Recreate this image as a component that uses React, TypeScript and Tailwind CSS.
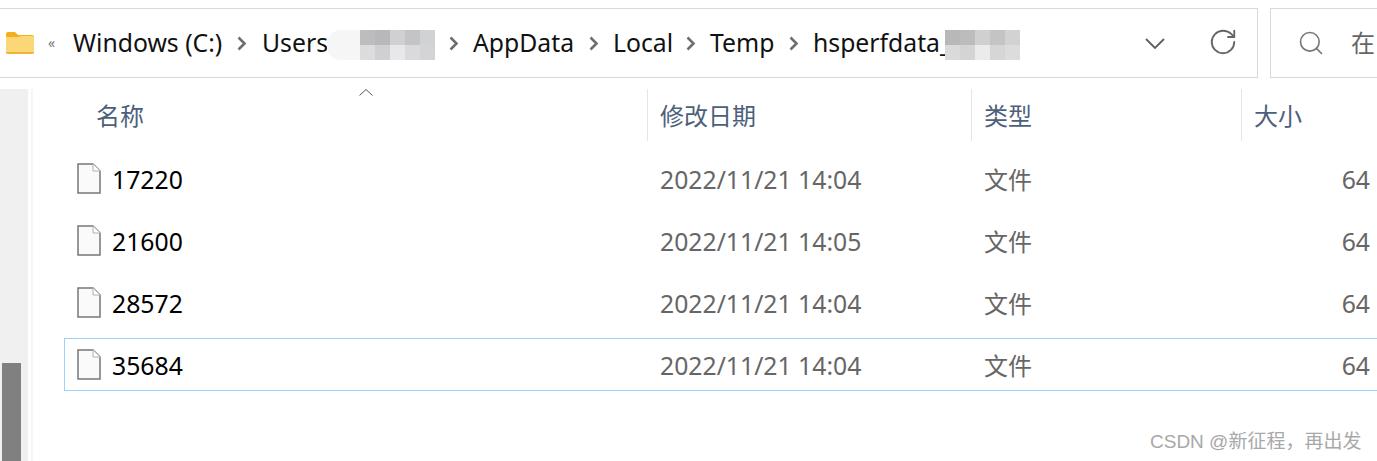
import { RotateCw, Search } from 'lucide-react';

const FONT = "font-['Noto_Sans','Noto_Sans_CJK_SC',sans-serif]";

const files = [
    { name: '17220', time: '2022/11/21 14:04' },
    { name: '21600', time: '2022/11/21 14:05' },
    { name: '28572', time: '2022/11/21 14:04' },
    { name: '35684', time: '2022/11/21 14:04', selected: true },
];

const mosaicA = ['bg-[#bdbdbf]', 'bg-[#b8b8ba]', 'bg-[#d0d0d2]', 'bg-[#c4c4c6]', 'bg-[#d0d2d4]', 'bg-[#dcdcde]', 'bg-[#d0d0d2]', 'bg-[#e8e8ea]', 'bg-[#dadadc]', 'bg-[#d4d4d6]'];
const mosaicB = ['bg-[#b8b8b8]', 'bg-[#bcbcbc]', 'bg-[#d0d0d0]', 'bg-[#c4c4c4]', 'bg-[#d2d2d2]', 'bg-[#dadada]', 'bg-[#d4d4d4]', 'bg-[#ebebeb]', 'bg-[#d6d6d6]', 'bg-[#dcdcdc]'];

function Mosaic({ cells }: { cells: string[] }) {
    return (
        <div className="grid grid-cols-[repeat(5,15px)] grid-rows-[repeat(2,15px)] shrink-0">
            {cells.map((c, i) => <div key={i} className={c} />)}
        </div>
    );
}

function Sep({ className }: { className: string }) {
    return (
        <svg width="15" height="15" viewBox="0 0 15 15" className={`shrink-0 ${className}`}>
            <path d="M4.5 1.5l6 6-6 6" fill="none" stroke="#6e6e6e" strokeWidth="2.6" />
        </svg>
    );
}

function FolderIcon() {
    return (
        <svg width="28" height="22" viewBox="0 0 28 22" className="shrink-0">
            <path d="M0 2a2 2 0 0 1 2-2h7l3 3h14a2 2 0 0 1 2 2v3H0z" fill="#f2b01e" />
            <path d="M0 5h12l3-1h11a2 2 0 0 1 2 2v14a2 2 0 0 1-2 2H2a2 2 0 0 1-2-2z" fill="#fcd778" />
            <path d="M0 20h28a2 2 0 0 1-2 2H2a2 2 0 0 1-2-2z" fill="#eeb433" />
        </svg>
    );
}

function FileIcon() {
    return (
        <svg width="24" height="31" viewBox="0 0 24 31" className="shrink-0">
            <path d="M1 1h15l7 7v22H1z" fill="#fafafa" stroke="#777" strokeWidth="1.5" />
            <path d="M16 1v7h7" fill="#fff" stroke="#b0b0b0" strokeWidth="1" />
        </svg>
    );
}

export default function App() {
    return (
        <div className={`${FONT} relative w-[1377px] h-[461px] overflow-hidden bg-white flex flex-col pt-2`}>
            {/* Address bar */}
            <div className="flex h-[70px] shrink-0">
                <div className="w-[1258px] border border-l-0 border-[#d9d9d9] flex items-center pl-1.5 text-[24.75px] text-[#111] whitespace-nowrap">
                    <FolderIcon />
                    <span className="ml-[14px] w-[9px] text-[14px] leading-none text-[#777]">«</span>
                    <span className="ml-[16px] w-[150px]">Windows (C:)</span>
                    <Sep className="ml-[11px]" />
                    <span className="ml-[13px] w-[63px]">Users</span>
                    <div className="ml-[2px] mt-1 w-[33px] h-[30px] rounded-l-[14px] bg-[#f6f6f6] shrink-0" />
                    <div className="mt-1"><Mosaic cells={mosaicA} /></div>
                    <Sep className="ml-[11px]" />
                    <span className="ml-[12px] w-[99px]">AppData</span>
                    <Sep className="ml-[14px]" />
                    <span className="ml-[12px] w-[56px]">Local</span>
                    <Sep className="ml-[14px]" />
                    <span className="ml-[12px] w-[63px]">Temp</span>
                    <Sep className="ml-[13px]" />
                    <span className="ml-[12px] w-[132px]">hsperfdata_</span>
                    <div className="mt-1"><Mosaic cells={mosaicB} /></div>
                    <svg width="20" height="11" viewBox="0 0 20 11" className="ml-[125px] shrink-0">
                        <path d="M1 1l9 9 9-9" fill="none" stroke="#5f5f5f" strokeWidth="1.8" />
                    </svg>
                    <RotateCw className="ml-[43px] -mt-[3px] w-[30px] h-[30px] text-[#666] shrink-0" strokeWidth={1.5} />
                </div>
                <div className="ml-3 flex-1 border border-r-0 border-[#d9d9d9] flex items-center pl-[26px] text-[24px] text-[#666]">
                    <Search className="w-[28px] h-[28px] text-[#777] shrink-0" strokeWidth={1.4} />
                    <span className="ml-[26px]">在</span>
                </div>
            </div>

            <div className="flex flex-1 mt-[11px] min-h-0">
                {/* Nav pane scrollbar */}
                <div className="w-[28px] bg-[#f0f0f0] flex flex-col justify-end pl-0.5 shrink-0">
                    <div className="w-[19px] h-[98px] bg-[#808080]" />
                </div>
                <div className="ml-[3px] w-[2px] bg-[#f5f5f5] shrink-0" />

                {/* File list */}
                <div className="flex-1 relative">
                    <svg width="14" height="7" viewBox="0 0 14 7" className="absolute left-[326px] top-0">
                        <path d="M0.5 6.5l6.5-6 6.5 6" fill="none" stroke="#555" strokeWidth="1" />
                    </svg>
                    <div className="flex h-[52px] text-[24px] leading-none text-[#4c607a]">
                        <div className="w-[614px] pl-[63px] pt-[15px]">名称</div>
                        <div className="w-[324px] border-l border-[#e5e5e5] pl-3 pt-[15px]">修改日期</div>
                        <div className="w-[270px] border-l border-[#e5e5e5] pl-3 pt-[15px]">类型</div>
                        <div className="flex-1 border-l border-[#e5e5e5] pl-3 pt-[15px]">大小</div>
                    </div>
                    <div className="flex flex-col mt-[11px] gap-[9px] ml-[31px]">
                        {files.map((f) => (
                            <div
                                key={f.name}
                                className={`flex items-center h-[53px] border border-r-0 ${f.selected ? 'border-[#99d1ff]' : 'border-transparent'}`}
                            >
                                <div className="ml-3 flex items-center w-[583px]">
                                    <FileIcon />
                                    <span className="ml-[11px] pt-0.5 text-[24.75px] text-black">{f.name}</span>
                                </div>
                                <span className="w-[324px] pt-0.5 text-[24.75px] text-[#666]">{f.time}</span>
                                <span className="w-[270px] pt-0.5 text-[24px] text-[#666]">文件</span>
                                <span className="w-[127px] pr-[11px] pt-0.5 text-right text-[24.75px] text-[#666]">64</span>
                            </div>
                        ))}
                    </div>
                </div>
            </div>

            {/* Watermark */}
            <div className="absolute left-[1150px] top-[430px] text-[19px] leading-6 text-[#a8a8a8] whitespace-nowrap font-['Liberation_Sans','Noto_Sans_CJK_SC',sans-serif]">
                CSDN @新征程，再出发
            </div>
        </div>
    );
}
